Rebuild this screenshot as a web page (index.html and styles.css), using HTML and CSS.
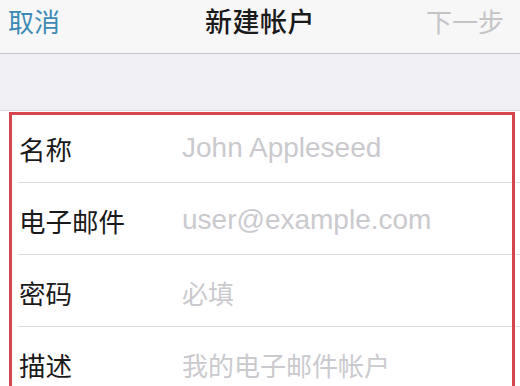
FILE: index.html
```html
<!DOCTYPE html>
<html lang="zh-CN">
<head>
    <meta charset="UTF-8">
    <meta name="viewport" content="width=device-width, initial-scale=1.0">
    <title>新建帐户</title>
    <link rel="stylesheet" href="styles.css">
</head>
<body>
    <div class="nav-bar">
        <span class="nav-btn cancel">取消</span>
        <span class="nav-title">新建帐户</span>
        <span class="nav-btn next">下一步</span>
    </div>

    <div class="spacer"></div>

    <div class="form-list">
        <div class="form-row">
            <span class="label">名称</span>
            <span class="placeholder latin">John Appleseed</span>
        </div>
        <div class="form-row">
            <span class="label">电子邮件</span>
            <span class="placeholder latin">user@example.com</span>
        </div>
        <div class="form-row">
            <span class="label">密码</span>
            <span class="placeholder">必填</span>
        </div>
        <div class="form-row">
            <span class="label">描述</span>
            <span class="placeholder">我的电子邮件帐户</span>
        </div>

        <!-- red highlight around the form -->
        <div class="highlight"></div>
    </div>
</body>
</html>
```

FILE: styles.css
```css
* {
    margin: 0;
    padding: 0;
    box-sizing: border-box;
}

body {
    background-color: #fff;
    font-family: "Noto Sans CJK SC", "Liberation Sans", sans-serif;
    color: #1a1a1a;
    overflow: hidden;
}

.nav-bar {
    height: 54px;
    display: flex;
    justify-content: space-between;
    align-items: flex-start;
    padding: 2px 16px 0 8px;
    background-color: #f7f7f8;
    border-bottom: 1px solid #c6c6ca;
    position: relative;
}

.nav-btn {
    font-size: 26px;
    line-height: 38px;
}

.cancel {
    color: #3d8bb5;
}

.next {
    color: #c4c4c6;
}

.nav-title {
    position: absolute;
    left: 0;
    right: 0;
    top: 2px;
    text-align: center;
    font-size: 27px;
    line-height: 38px;
    font-weight: 500;
    color: #1a1a1a;
    letter-spacing: 0.5px;
}

.spacer {
    height: 57px;
    background-color: #efeff4;
    border-bottom: 1px solid #dcdce0;
}

.form-list {
    position: relative;
    background-color: #fff;
}

.form-row {
    height: 72px;
    margin-left: 18px;
    display: flex;
    align-items: center;
    border-bottom: 1px solid #dcdcdc;
    padding-top: 3px;
}

.label {
    width: 164px;
    padding-left: 1px;
    font-size: 26.5px;
    color: #1a1a1a;
}

.placeholder {
    font-size: 26px;
    color: #cacace;
}

.placeholder.latin {
    font-family: "Liberation Sans", sans-serif;
    font-size: 28px;
}

.highlight {
    position: absolute;
    left: 9px;
    top: 1px;
    width: 506px;
    height: 320px;
    border: 3px solid #d6454d;
    pointer-events: none;
}
```
